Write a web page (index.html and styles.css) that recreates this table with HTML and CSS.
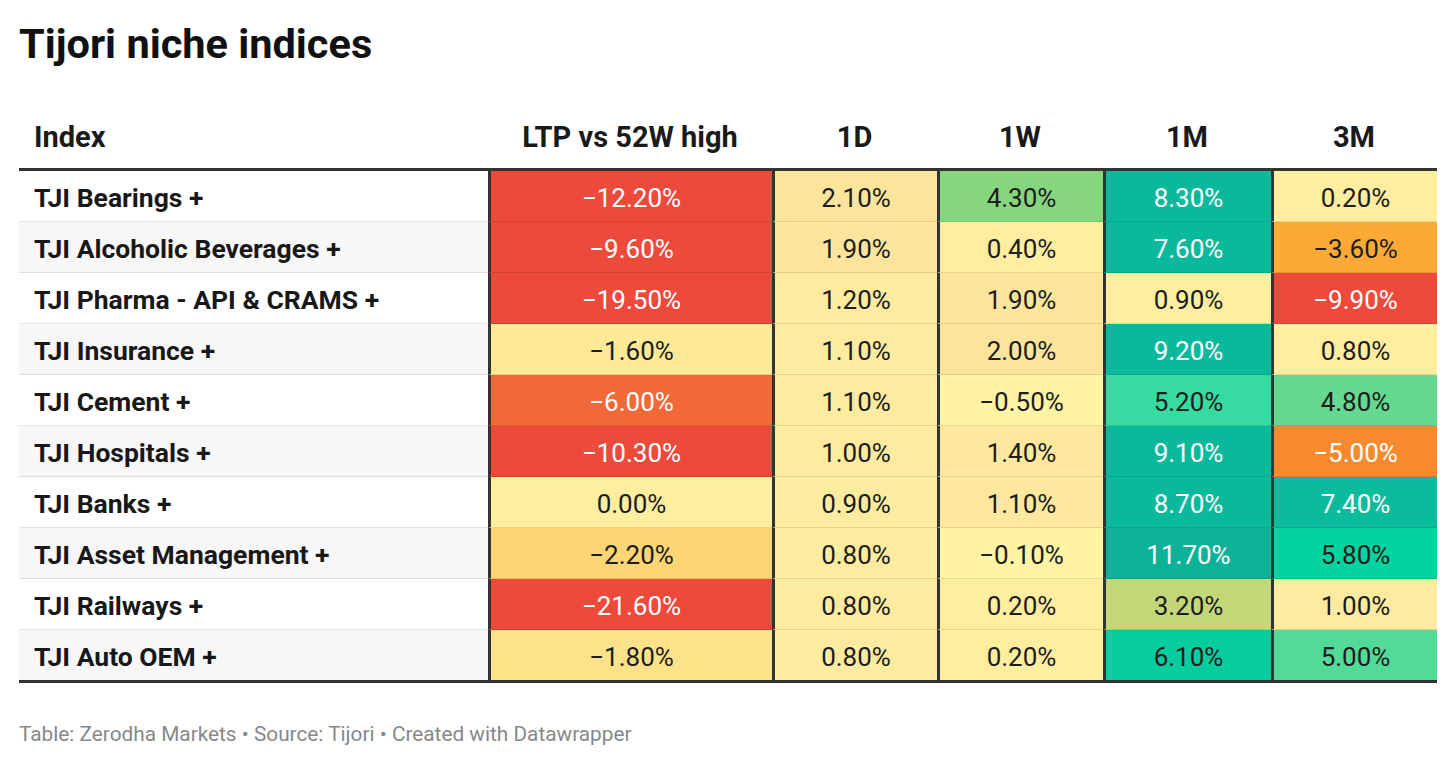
FILE: index.html
```html
<!DOCTYPE html>
<html lang="en">
<head>
<meta charset="utf-8">
<title>Tijori niche indices</title>
<link rel="stylesheet" href="styles.css">
</head>
<body>
<div class="wrap">
  <h1 class="title">Tijori niche indices</h1>
  <table class="tbl">
    <colgroup>
      <col class="c-index">
      <col class="c-ltp">
      <col class="c-1d">
      <col class="c-1w">
      <col class="c-1m">
      <col class="c-3m">
    </colgroup>
    <thead>
      <tr>
        <th class="h-left">Index</th>
        <th>LTP vs 52W high</th>
        <th>1D</th>
        <th>1W</th>
        <th>1M</th>
        <th>3M</th>
      </tr>
    </thead>
    <tbody>
      <tr>
        <td class="lbl">TJI Bearings +</td>
        <td class="v red w">−12.20%</td>
        <td class="v y4">2.10%</td>
        <td class="v g1">4.30%</td>
        <td class="v teal w">8.30%</td>
        <td class="v y1">0.20%</td>
      </tr>
      <tr class="alt">
        <td class="lbl">TJI Alcoholic Beverages +</td>
        <td class="v red w">−9.60%</td>
        <td class="v y4">1.90%</td>
        <td class="v y1">0.40%</td>
        <td class="v teal w">7.60%</td>
        <td class="v or1">−3.60%</td>
      </tr>
      <tr>
        <td class="lbl">TJI Pharma - API &amp; CRAMS +</td>
        <td class="v red w">−19.50%</td>
        <td class="v y2">1.20%</td>
        <td class="v y4">1.90%</td>
        <td class="v y1">0.90%</td>
        <td class="v red w">−9.90%</td>
      </tr>
      <tr class="alt">
        <td class="lbl">TJI Insurance +</td>
        <td class="v y5">−1.60%</td>
        <td class="v y2">1.10%</td>
        <td class="v y4">2.00%</td>
        <td class="v teal w">9.20%</td>
        <td class="v y1">0.80%</td>
      </tr>
      <tr>
        <td class="lbl">TJI Cement +</td>
        <td class="v or3 w">−6.00%</td>
        <td class="v y2">1.10%</td>
        <td class="v y0">−0.50%</td>
        <td class="v mint">5.20%</td>
        <td class="v g2">4.80%</td>
      </tr>
      <tr class="alt">
        <td class="lbl">TJI Hospitals +</td>
        <td class="v red w">−10.30%</td>
        <td class="v y2">1.00%</td>
        <td class="v y3">1.40%</td>
        <td class="v teal w">9.10%</td>
        <td class="v or2 w">−5.00%</td>
      </tr>
      <tr>
        <td class="lbl">TJI Banks +</td>
        <td class="v y1">0.00%</td>
        <td class="v y2">0.90%</td>
        <td class="v y3">1.10%</td>
        <td class="v teal w">8.70%</td>
        <td class="v teal2 w">7.40%</td>
      </tr>
      <tr class="alt">
        <td class="lbl">TJI Asset Management +</td>
        <td class="v y7">−2.20%</td>
        <td class="v y2">0.80%</td>
        <td class="v y0">−0.10%</td>
        <td class="v teal3 w">11.70%</td>
        <td class="v green3">5.80%</td>
      </tr>
      <tr>
        <td class="lbl">TJI Railways +</td>
        <td class="v red w">−21.60%</td>
        <td class="v y2">0.80%</td>
        <td class="v y1">0.20%</td>
        <td class="v olive">3.20%</td>
        <td class="v y2">1.00%</td>
      </tr>
      <tr class="alt last">
        <td class="lbl">TJI Auto OEM +</td>
        <td class="v y6">−1.80%</td>
        <td class="v y2">0.80%</td>
        <td class="v y1">0.20%</td>
        <td class="v green4">6.10%</td>
        <td class="v g3">5.00%</td>
      </tr>
    </tbody>
  </table>
  <p class="foot">Table: Zerodha Markets • Source: Tijori • Created with Datawrapper</p>
</div>
</body>
</html>
```

FILE: styles.css
```css
* { box-sizing: border-box; }
html, body { margin: 0; padding: 0; background: #fff; }
body {
  font-family: Roboto, "Liberation Sans", sans-serif;
  color: #1d1d1d;
}
.wrap {
  padding: 0 19px;
  width: 1456px;
}
.title {
  margin: 20px 0 0 0;
  font-size: 41.5px;
  line-height: 47px;
  font-weight: 700;
  color: #111;
}
.tbl {
  margin-top: 53px;
  width: 1418px;
  table-layout: fixed;
  border-collapse: separate;
  border-spacing: 0;
}
.c-index { width: 469px; }
.c-ltp { width: 284px; }
.c-1d { width: 165px; }
.c-1w { width: 166px; }
.c-1m { width: 168px; }
.c-3m { width: 166px; }

.tbl th {
  font-size: 29px;
  line-height: 34px;
  font-weight: 700;
  color: #1a1a1a;
  text-align: center;
  padding: 0 0 14px 0;
  border-bottom: 3px solid #333;
  vertical-align: bottom;
}
.tbl th.h-left {
  text-align: left;
  padding-left: 15px;
}
.tbl td {
  height: 51px;
  padding: 4px 0 0 0;
  line-height: 46px;
  border-bottom: 1px solid rgba(0, 0, 0, 0.1);
  white-space: nowrap;
}
.tbl tr.last td {
  border-bottom: 3px solid #333;
  height: 53px;
}
.lbl {
  font-size: 26.5px;
  font-weight: 700;
  color: #181818;
  padding-left: 15px !important;
  background: #fff;
}
.alt .lbl { background: #f7f7f7; }
.v {
  font-size: 26px;
  text-align: center;
  border-left: 3px solid #333;
  color: #1d1d1d;
}
.v.w { color: #fff; }

.red { background: #ee4a3b; }
.or3 { background: #f16937; }
.or2 { background: #f78a2f; }
.or1 { background: #fcaa35; }
.y7 { background: #fcd574; }
.y6 { background: #fde289; }
.y5 { background: #fde996; }
.y4 { background: #fce49c; }
.y3 { background: #fde89e; }
.y2 { background: #feeb9f; }
.y1 { background: #ffeea0; }
.y0 { background: #fff3a4; }
.olive { background: #c2d878; }
.g1 { background: #86d67e; }
.g2 { background: #65d98f; }
.g3 { background: #52db98; }
.mint { background: #35dba1; }
.green3 { background: #02d49f; }
.green4 { background: #06cc9e; }
.teal { background: #0ab99c; }
.teal2 { background: #0bbb9b; }
.teal3 { background: #0bb298; }

.foot {
  margin: 39px 0 0 0;
  font-size: 20.8px;
  line-height: 25px;
  color: #888;
}
```
